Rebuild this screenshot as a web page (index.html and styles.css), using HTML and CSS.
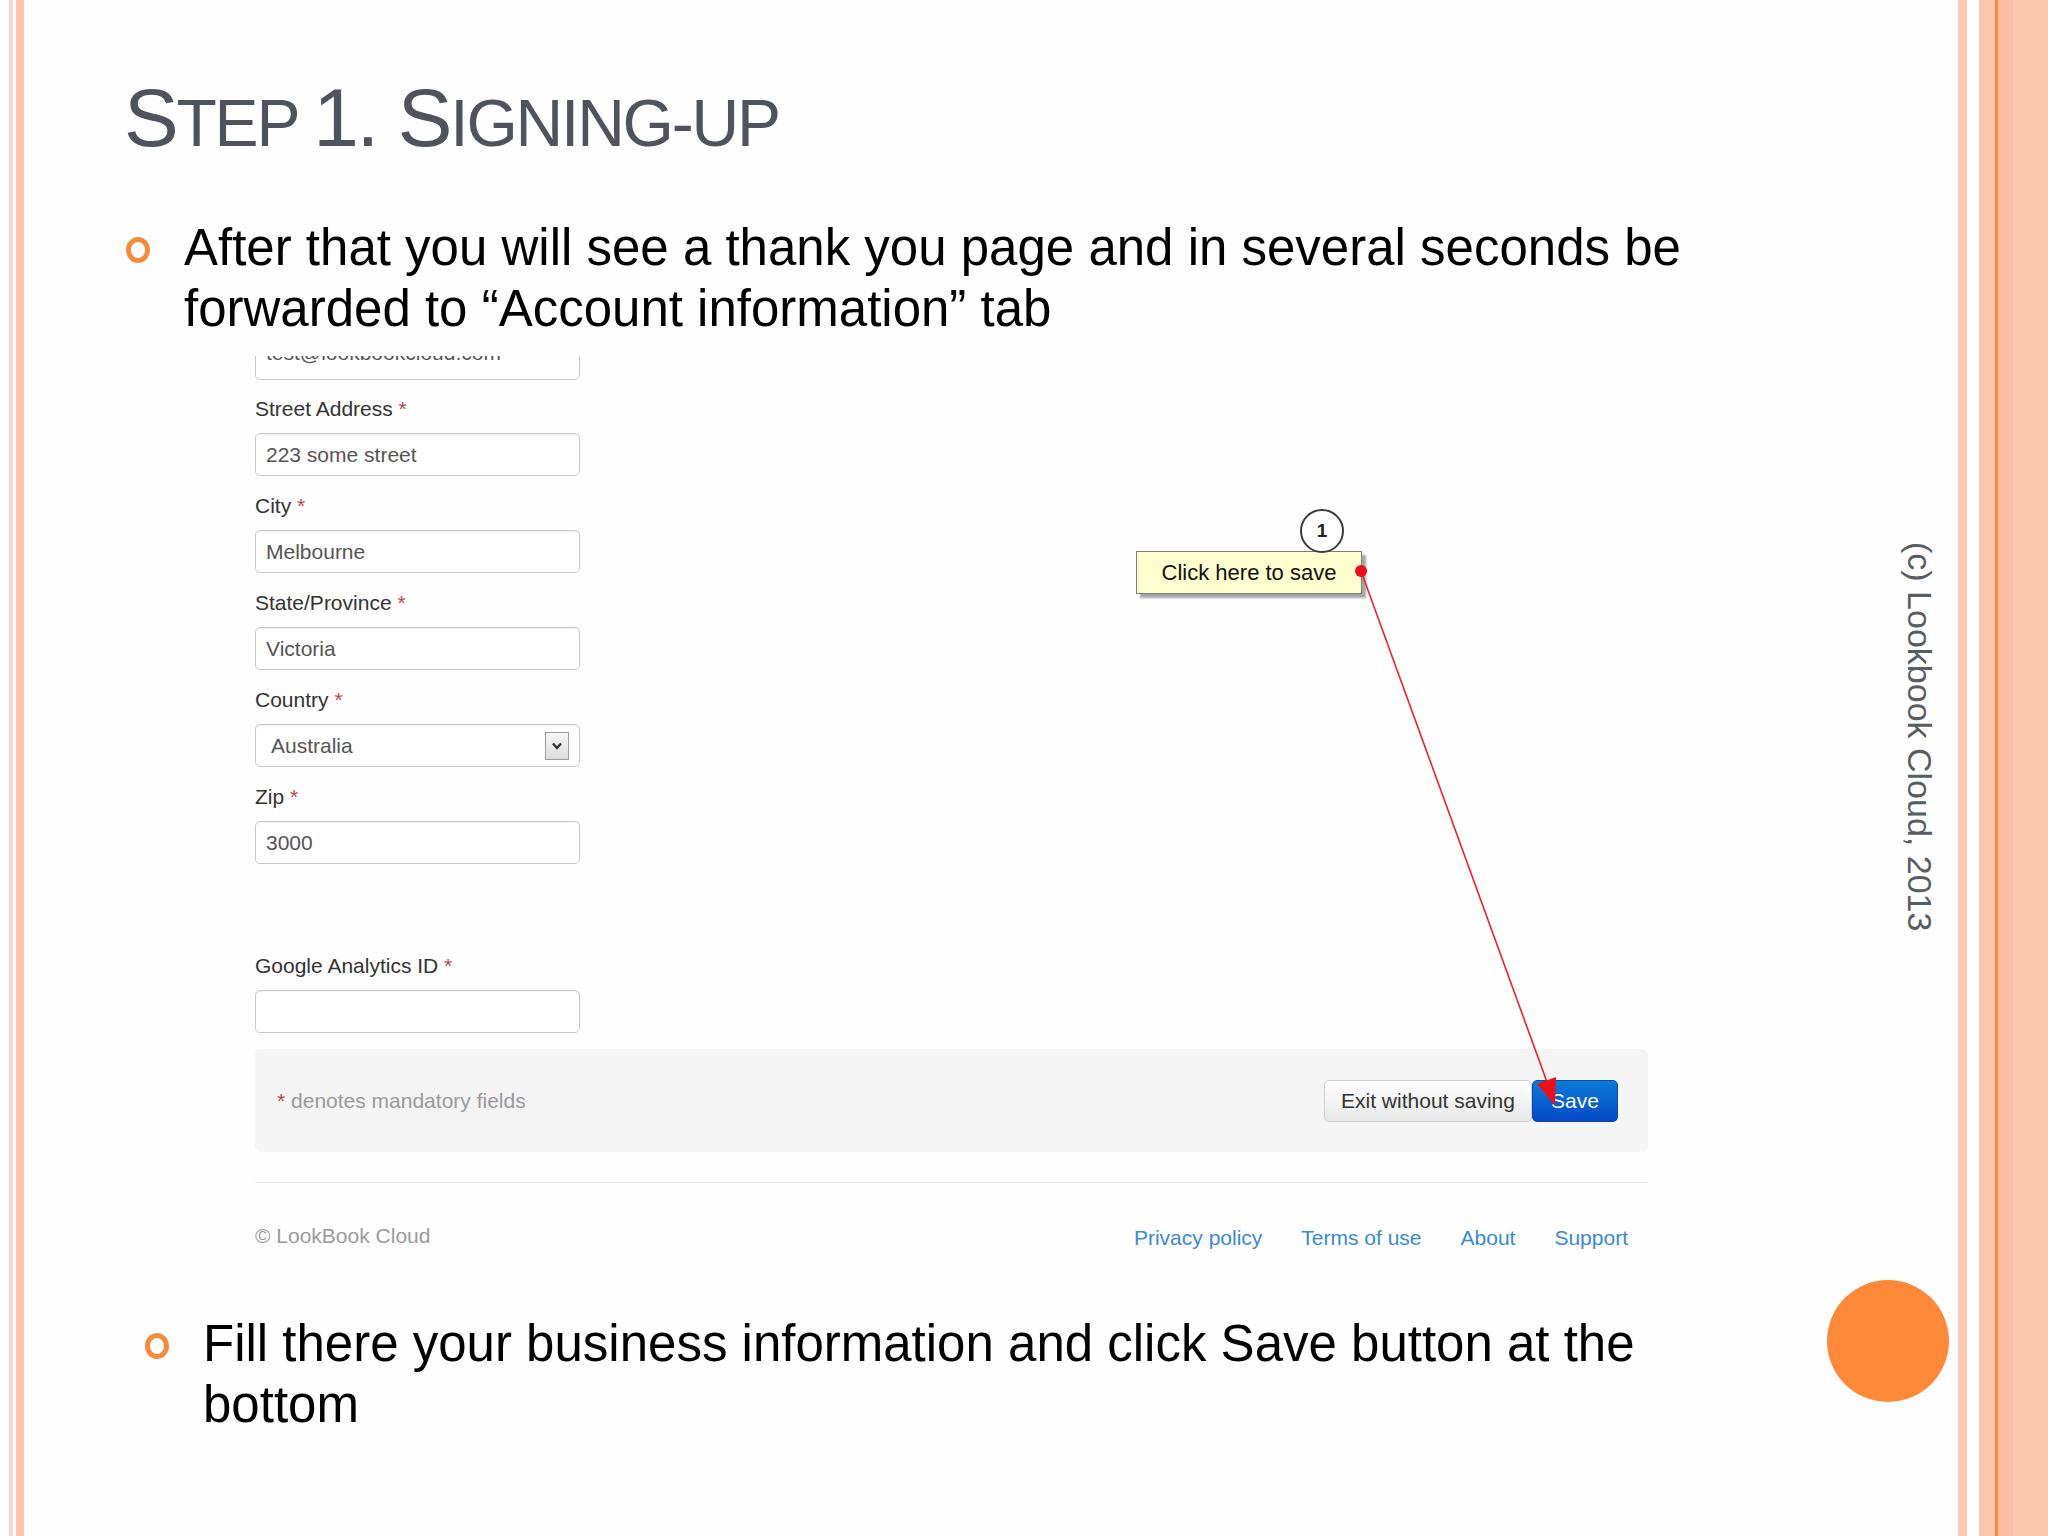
FILE: index.html
```html
<!DOCTYPE html>
<html lang="en">
<head>
<meta charset="utf-8">
<title>Step 1. Signing-up</title>
<link rel="stylesheet" href="styles.css">
</head>
<body>
<div class="slide">
  <div class="edge-left"></div>
  <main class="content">
    <h1 class="title"><span class="big">S</span>TEP <span class="big">1. S</span>IGNING-UP</h1>
    <ul class="bullets first">
      <li><span class="ring"></span><span class="btext">After that you will see a thank you page and in several seconds be forwarded to “Account information” tab</span></li>
    </ul>

    <div class="shot">
      <div class="input partial">test@lookbookcloud.com</div>

      <div class="field first-field">
        <div class="label">Street Address <span class="req">*</span></div>
        <div class="input">223 some street</div>
      </div>
      <div class="field">
        <div class="label">City <span class="req">*</span></div>
        <div class="input">Melbourne</div>
      </div>
      <div class="field">
        <div class="label">State/Province <span class="req">*</span></div>
        <div class="input">Victoria</div>
      </div>
      <div class="field">
        <div class="label">Country <span class="req">*</span></div>
        <div class="input select"><span>Australia</span><span class="sel-btn"><svg width="12" height="10" viewBox="0 0 12 10"><path d="M2 2.5 L6 7 L10 2.5" fill="none" stroke="#333" stroke-width="2.4"/></svg></span></div>
      </div>
      <div class="field">
        <div class="label">Zip <span class="req">*</span></div>
        <div class="input">3000</div>
      </div>
      <div class="field ga">
        <div class="label">Google Analytics ID <span class="req">*</span></div>
        <div class="input"></div>
      </div>

      <div class="actions">
        <div class="note"><span class="req">*</span> denotes mandatory fields</div>
        <div class="btns">
          <span class="btn btn-exit">Exit without saving</span>
          <span class="btn btn-save">Save</span>
        </div>
      </div>

      <hr class="rule">

      <div class="footer">
        <span class="copy">© LookBook Cloud</span>
        <nav class="links">
          <a>Privacy policy</a>
          <a>Terms of use</a>
          <a>About</a>
          <a>Support</a>
        </nav>
      </div>

      <div class="callout">Click here to save</div>
      <div class="step-num">1</div>
      <svg class="arrow" width="1393" height="900" viewBox="0 0 1393 900">
        <line x1="1106" y1="215" x2="1292" y2="726" stroke="#e8262a" stroke-width="1.6"/>
        <polygon points="1300,750 1301,721 1282,728" fill="#e8101a"/>
        <circle cx="1106" cy="215" r="6" fill="#e8101a"/>
      </svg>
    </div>

    <ul class="bullets second">
      <li><span class="ring"></span><span class="btext">Fill there your business information and click Save button at the bottom</span></li>
    </ul>
  </main>
  <div class="edge-right"></div>

  <div class="vtext">(c) Lookbook Cloud, 2013</div>
  <div class="dot-deco"></div>
</div>
</body>
</html>
```

FILE: styles.css
```css
html, body {
  margin: 0;
  padding: 0;
}

body {
  width: 2048px;
  height: 1536px;
  overflow: hidden;
  background: #fffefe;
  font-family: "Liberation Sans", Arial, sans-serif;
}

.slide {
  position: relative;
  width: 2048px;
  height: 1536px;
  display: grid;
  grid-template-columns: 24px 1fr 90px;
}

.edge-left {
  background: linear-gradient(to right,
    #fffefe 0, #fffefe 9px,
    #fcd6c8 9px, #fcd6c8 13px,
    #fffefe 13px, #fffefe 16px,
    #fcc5ae 16px, #fcc5ae 24px);
}

.edge-right {
  background: linear-gradient(to right,
    #fcc9b3 0, #fcc9b3 9px,
    #ffffff 9px, #ffffff 21px,
    #fdc7af 21px, #fdc7af 37px,
    #fb8a43 37px, #fb8a43 40px,
    #fcbea3 40px, #fcbea3 55px,
    #fdc6ae 55px, #fdc6ae 90px);
}

.content {
  min-width: 0;
}

/* Title */
.title {
  margin: 77px 0 0 100px;
  font-weight: normal;
  font-size: 66px;
  line-height: 82px;
  height: 82px;
  color: #4f535b;
  letter-spacing: -2.2px;
  white-space: nowrap;
}

.title .big {
  font-size: 82px;
}

/* Bullets */
.bullets {
  list-style: none;
  margin: 0;
  padding: 0;
}

.bullets li {
  display: flex;
  align-items: flex-start;
  font-size: 51px;
  line-height: 61px;
  color: #000;
}

.bullets.first {
  margin-top: 58px;
  padding-left: 102px;
}

.bullets.second {
  margin-top: 61px;
  padding-left: 121px;
}

.ring {
  flex: none;
  box-sizing: border-box;
  width: 24px;
  height: 26px;
  border: 5px solid #f68b3c;
  border-radius: 50%;
  margin-top: 20px;
  margin-right: 34px;
}

.btext {
  width: 1560px;
}

/* Embedded screenshot */
.shot {
  position: relative;
  width: 1393px;
  margin: 17px 0 0 231px;
  overflow: hidden;
  font-size: 21px;
  color: #333;
}

.label {
  line-height: 28px;
  margin-bottom: 10px;
  color: #333;
}

.req {
  color: #b94a48;
}

.input {
  box-sizing: border-box;
  width: 325px;
  height: 43px;
  border: 1px solid #c8c8c8;
  border-radius: 5px;
  padding: 0 10px;
  display: flex;
  align-items: center;
  color: #555;
  background: #fff;
  box-shadow: inset 0 1px 1px rgba(0,0,0,0.06);
  white-space: nowrap;
}

.input.partial {
  margin-top: -19px;
  padding-bottom: 12px;
}

.field {
  margin-top: 16px;
}

.field.first-field {
  margin-top: 15px;
}

.field.ga {
  margin-top: 88px;
}

.select {
  justify-content: space-between;
  padding: 0 10px 0 15px;
}

.sel-btn {
  box-sizing: border-box;
  width: 24px;
  height: 28px;
  border: 1px solid #9a9a9a;
  background: linear-gradient(#f7f7f7, #dcdcdc);
  display: flex;
  align-items: center;
  justify-content: center;
}

.actions {
  margin-top: 16px;
  height: 103px;
  background: #f5f5f6;
  border-radius: 6px;
  display: flex;
  align-items: center;
  justify-content: space-between;
  padding: 0 30px 0 22px;
}

.note {
  color: #9a9a9a;
}

.btns {
  display: flex;
}

.btn {
  box-sizing: border-box;
  height: 42px;
  display: flex;
  align-items: center;
  justify-content: center;
  border-radius: 5px;
  padding: 0;
  white-space: nowrap;
}

.btn-exit {
  width: 208px;
  color: #333;
  border: 1px solid #cfcfcf;
  background: linear-gradient(#ffffff, #e8e8e8);
}

.btn-save {
  width: 86px;
  color: #fff;
  background: linear-gradient(#0b7bd8, #0449c8);
  border: 1px solid #0848b8;
}

.rule {
  margin: 30px 0 0;
  border: 0;
  border-top: 1px solid #e6e6e6;
  height: 0;
}

.footer {
  display: flex;
  justify-content: space-between;
  align-items: center;
  padding: 41px 20px 0 0;
  line-height: 28px;
}

.copy {
  color: #9a9a9a;
  position: relative;
  top: -2px;
}

.links {
  display: flex;
  gap: 39px;
}

.links a {
  color: #3a8bcf;
}

/* Annotation overlay */
.callout {
  position: absolute;
  left: 881px;
  top: 195px;
  box-sizing: border-box;
  width: 226px;
  height: 43px;
  background: #fefecf;
  border: 1px solid #7d7d7d;
  box-shadow: 4px 4px 2px rgba(0,0,0,0.35);
  display: flex;
  align-items: center;
  justify-content: center;
  font-size: 22px;
  color: #111;
}

.step-num {
  position: absolute;
  left: 1045px;
  top: 153px;
  box-sizing: border-box;
  width: 44px;
  height: 44px;
  border: 2px solid #3a3a3a;
  border-radius: 50%;
  background: #fff;
  display: flex;
  align-items: center;
  justify-content: center;
  font-weight: bold;
  font-size: 19px;
  color: #222;
}

.arrow {
  position: absolute;
  left: 0;
  top: 0;
  pointer-events: none;
}

/* Slide decorations */
.vtext {
  position: absolute;
  left: 1900px;
  top: 542px;
  writing-mode: vertical-rl;
  font-size: 34px;
  line-height: 40px;
  color: #585c63;
  white-space: nowrap;
}

.dot-deco {
  position: absolute;
  left: 1827px;
  top: 1280px;
  width: 122px;
  height: 122px;
  border-radius: 50%;
  background: #fd8939;
}
```
